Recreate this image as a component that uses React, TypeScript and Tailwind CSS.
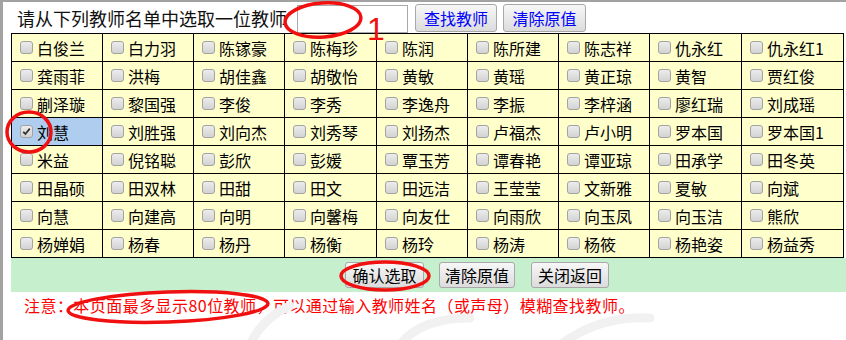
import { useState } from 'react';

const TEACHERS: string[][] = [
  ['白俊兰', '白力羽', '陈镓豪', '陈梅珍', '陈润', '陈所建', '陈志祥', '仇永红', '仇永红1'],
  ['龚雨菲', '洪梅', '胡佳鑫', '胡敬怡', '黄敏', '黄瑶', '黄正琼', '黄智', '贾红俊'],
  ['蒯泽璇', '黎国强', '李俊', '李秀', '李逸舟', '李振', '李梓涵', '廖红瑞', '刘成瑶'],
  ['刘慧', '刘胜强', '刘向杰', '刘秀琴', '刘扬杰', '卢福杰', '卢小明', '罗本国', '罗本国1'],
  ['米益', '倪铭聪', '彭欣', '彭媛', '覃玉芳', '谭春艳', '谭亚琼', '田承学', '田冬英'],
  ['田晶硕', '田双林', '田甜', '田文', '田远洁', '王莹莹', '文新雅', '夏敏', '向斌'],
  ['向慧', '向建高', '向明', '向馨梅', '向友仕', '向雨欣', '向玉凤', '向玉洁', '熊欣'],
  ['杨婵娟', '杨春', '杨丹', '杨衡', '杨玲', '杨涛', '杨筱', '杨艳姿', '杨益秀'],
];

const COL_WIDTHS = [91, 91, 91, 92, 91, 91, 91, 92, 102];

const CheckBox = ({ checked }: { checked: boolean }) => (
  <span className="relative inline-block h-[13px] w-[13px] shrink-0 rounded-[3px] border border-[#a3a3a3] bg-linear-to-b from-[#ececec] to-[#d3d3d3]">
    {checked && (
      <svg viewBox="0 0 13 13" className="absolute -top-px -left-px h-[13px] w-[13px]">
        <path d="M3.2 6.8 L5.4 9 L9.8 3.6" fill="none" stroke="#333" strokeWidth="1.8" />
      </svg>
    )}
  </span>
);

const GrayButton = ({ title, className }: { title: string; className?: string }) => (
  <button
    type="button"
    className={`rounded-[3px] border border-[#a8a8a8] bg-linear-to-b from-[#f7f7f7] to-[#dcdcdc] text-[16px] leading-none ${className ?? ''}`}
  >
    {title}
  </button>
);

const App = () => {
  const [selected, setSelected] = useState('刘慧');

  return (
    <div className="relative h-[340px] w-[846px] overflow-hidden bg-white font-['Noto_Sans_CJK_SC','Noto_Sans',sans-serif] text-black">
      <div className="h-full border-t-2 border-l-[3px] border-[#a2a2a2]">
        {/* 顶部搜索 */}
        <div className="flex h-[31px] items-center pl-[14px]">
          <span className="text-[18px] leading-none text-[#111]">请从下列教师名单中选取一位教师</span>
          <input
            type="text"
            className="ml-[10px] mt-[2px] h-[28px] w-[111px] border border-[#a9a9a9] bg-white outline-none"
          />
          <GrayButton title="查找教师" className="ml-[7px] h-[28px] w-[82px] text-[#0000ff]" />
          <GrayButton title="清除原值" className="ml-[6px] h-[28px] w-[83px] text-[#0000ff]" />
        </div>

        {/* 教师列表 */}
        <table className="ml-[8px] table-fixed border-collapse">
          <colgroup>
            {COL_WIDTHS.map((w, i) => (
              <col key={i} style={{ width: w }} />
            ))}
          </colgroup>
          <tbody>
            {TEACHERS.map((row, r) => (
              <tr key={r}>
                {row.map((name) => {
                  const checked = name === selected;
                  return (
                    <td
                      key={name}
                      onClick={() => setSelected(name)}
                      className={`h-[28px] border border-black p-0 ${checked ? 'bg-[#aecdef]' : 'bg-[#ffffcc]'}`}
                    >
                      <div className="flex items-center gap-[4px] pl-[8px] text-[16px] leading-none">
                        <CheckBox checked={checked} />
                        <span>{name}</span>
                      </div>
                    </td>
                  );
                })}
              </tr>
            ))}
          </tbody>
        </table>

        {/* 底部按钮 */}
        <div className="ml-[8px] flex h-[34px] items-center bg-[#c6efce] pl-[334px]">
          <GrayButton title="确认选取" className="h-[26px] w-[79px]" />
          <GrayButton title="清除原值" className="ml-[15px] h-[26px] w-[76px]" />
          <GrayButton title="关闭返回" className="ml-[16px] h-[26px] w-[78px]" />
        </div>

        <p className="pl-[21px] text-[16px] leading-[26px] tracking-[0.45px] text-[#ff0000]">
          注意：本页面最多显示80位教师，可以通过输入教师姓名（或声母）模糊查找教师。
        </p>
      </div>

      {/* 标注 */}
      <svg className="pointer-events-none absolute top-0 left-0 h-[340px] w-[846px]" viewBox="0 0 846 340">
        <g fill="none" stroke="#f1f1f1" strokeWidth="9" strokeLinecap="round">
          <path d="M250 345 Q262 318 290 306" />
          <path d="M400 345 Q420 318 470 318" />
          <path d="M560 345 Q600 315 650 318" />
        </g>
        <g fill="none" stroke="#f01010" strokeWidth="3.5">
          <ellipse cx="323" cy="20" rx="38" ry="17" transform="rotate(-4 323 20)" />
          <ellipse cx="29" cy="132" rx="22" ry="20" />
          <ellipse cx="385" cy="276" rx="44" ry="14" />
          <ellipse cx="168" cy="307" rx="100" ry="15" transform="rotate(-2 168 307)" />
        </g>
        <text x="367" y="40" fill="#f01010" fontSize="32" fontFamily="Liberation Sans, sans-serif">
          1
        </text>
      </svg>
    </div>
  );
};

export default App;
